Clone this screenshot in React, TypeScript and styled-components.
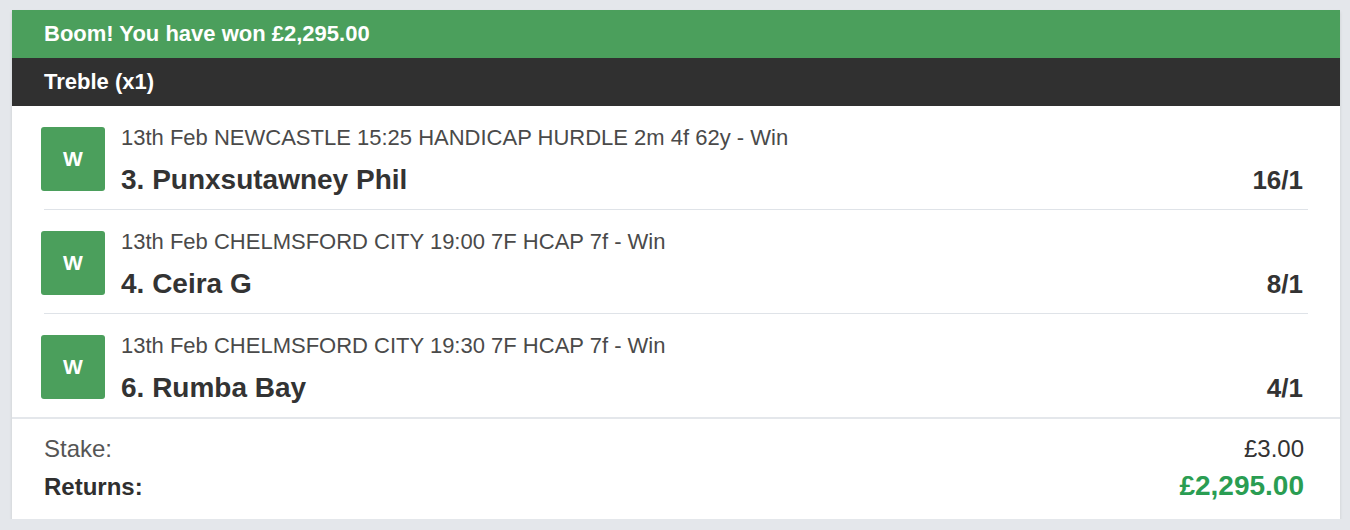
import React from "react";
import styled, { createGlobalStyle } from "styled-components";

const GlobalStyle = createGlobalStyle`
  html, body {
    margin: 0;
    padding: 0;
    background: #e4e7eb;
    font-family: "Liberation Sans", Arial, Helvetica, sans-serif;
  }
  * { box-sizing: border-box; }
`;

const Page = styled.div`
  padding: 10px 10px 0 12px;
  width: 1350px;
`;

const Card = styled.section`
  width: 1328px;
  background: #ffffff;
  box-shadow: 0 2px 3px rgba(0, 0, 0, 0.12);
`;

const Banner = styled.div<{ $tone: "win" | "dark" }>`
  height: 48px;
  display: flex;
  align-items: center;
  padding: 0 32px;
  background: ${(p) => (p.$tone === "win" ? "#4b9f5c" : "#303030")};
  color: #ffffff;
  font-size: 22px;
  font-weight: 700;
`;

const Legs = styled.div`
  padding: 0 32px;
`;

const Leg = styled.div<{ $last?: boolean }>`
  display: flex;
  align-items: flex-start;
  gap: 16px;
  padding: 20px 0 14px;
  border-bottom: ${(p) => (p.$last ? "none" : "1px solid #dfe3e8")};
`;

const ResultBadge = styled.div`
  flex: 0 0 64px;
  width: 64px;
  height: 64px;
  margin: 1px 0 0 -3px;
  border-radius: 3px;
  background: #4b9f5c;
  color: #ffffff;
  display: flex;
  align-items: center;
  justify-content: center;
  font-size: 21px;
  font-weight: 700;
`;

const LegBody = styled.div`
  flex: 1;
  display: flex;
  flex-direction: column;
  gap: 15px;
`;

const RaceTitle = styled.div`
  font-size: 22px;
  line-height: 24px;
  color: #4a4a4a;
`;

const SelectionLine = styled.div`
  display: flex;
  justify-content: space-between;
  align-items: baseline;
  padding-right: 5px;
`;

const Selection = styled.div`
  font-size: 28px;
  line-height: 30px;
  font-weight: 700;
  color: #333333;
`;

const Odds = styled.div`
  font-size: 26px;
  line-height: 30px;
  font-weight: 700;
  color: #333333;
`;

const Summary = styled.div`
  border-top: 2px solid #e4e7eb;
  padding: 16px 36px 17px 32px;
  display: flex;
  flex-direction: column;
  gap: 7px;
`;

const SummaryRow = styled.div`
  display: flex;
  justify-content: space-between;
  align-items: baseline;
`;

const SummaryLabel = styled.span<{ $strong?: boolean }>`
  font-size: 24px;
  line-height: 28px;
  font-weight: ${(p) => (p.$strong ? 700 : 400)};
  color: ${(p) => (p.$strong ? "#2f2f2f" : "#555555")};
`;

const SummaryValue = styled.span<{ $win?: boolean }>`
  font-size: ${(p) => (p.$win ? "28px" : "24px")};
  line-height: ${(p) => (p.$win ? "32px" : "28px")};
  font-weight: ${(p) => (p.$win ? 700 : 400)};
  color: ${(p) => (p.$win ? "#2a9d52" : "#333333")};
`;

const legs = [
  {
    race: "13th Feb NEWCASTLE 15:25 HANDICAP HURDLE 2m 4f 62y - Win",
    horse: "3. Punxsutawney Phil",
    odds: "16/1",
  },
  {
    race: "13th Feb CHELMSFORD CITY 19:00 7F HCAP 7f - Win",
    horse: "4. Ceira G",
    odds: "8/1",
  },
  {
    race: "13th Feb CHELMSFORD CITY 19:30 7F HCAP 7f - Win",
    horse: "6. Rumba Bay",
    odds: "4/1",
  },
];

export default function App() {
  return (
    <>
      <GlobalStyle />
      <Page>
        <Card>
          <Banner $tone="win">Boom! You have won £2,295.00</Banner>
          <Banner $tone="dark">Treble (x1)</Banner>
          <Legs>
            {legs.map((leg, i) => (
              <Leg key={leg.horse} $last={i === legs.length - 1}>
                <ResultBadge>W</ResultBadge>
                <LegBody>
                  <RaceTitle>{leg.race}</RaceTitle>
                  <SelectionLine>
                    <Selection>{leg.horse}</Selection>
                    <Odds>{leg.odds}</Odds>
                  </SelectionLine>
                </LegBody>
              </Leg>
            ))}
          </Legs>
          <Summary>
            <SummaryRow>
              <SummaryLabel>Stake:</SummaryLabel>
              <SummaryValue>£3.00</SummaryValue>
            </SummaryRow>
            <SummaryRow>
              <SummaryLabel $strong>Returns:</SummaryLabel>
              <SummaryValue $win>£2,295.00</SummaryValue>
            </SummaryRow>
          </Summary>
        </Card>
      </Page>
    </>
  );
}
